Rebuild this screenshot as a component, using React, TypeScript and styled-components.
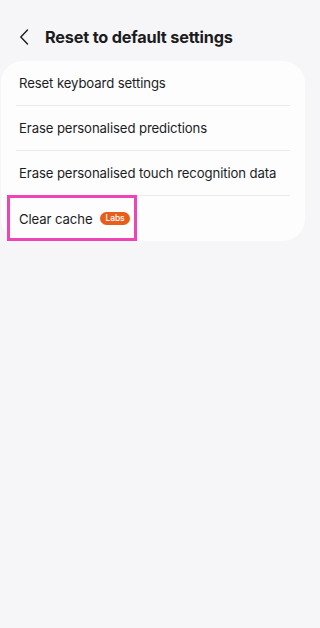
import styled, { createGlobalStyle } from "styled-components"

const GlobalStyle = createGlobalStyle`
  html, body {
    margin: 0;
    padding: 0;
    background: #f6f6f8;
  }
  body {
    font-family: Inter, Roboto, "Noto Sans", sans-serif;
    color: #1c1c1e;
  }
`

const Page = styled.div`
  width: 306px;
  min-height: 628px;
  background: #f6f6f8;
`

const Header = styled.div`
  display: flex;
  align-items: center;
  height: 61px;
  padding: 12px 0 0 16px;
  box-sizing: border-box;
`

const BackButton = styled.button`
  display: flex;
  align-items: center;
  justify-content: center;
  width: 16px;
  height: 24px;
  padding: 0;
  margin-right: 13px;
  border: 0;
  background: none;
  color: #1c1c1e;
`

const Title = styled.h1`
  margin: 0;
  font-size: 16.3px;
  font-weight: 700;
  letter-spacing: -0.2px;
`

const Card = styled.div`
  background: #fdfdfe;
  border-radius: 22px;
  margin: 0 1px;
  padding: 0 15px;
`

const Row = styled.div<{ $last?: boolean }>`
  position: relative;
  display: flex;
  align-items: center;
  height: 45px;
  box-sizing: border-box;
  padding: 0 3px;
  border-bottom: ${(p) => (p.$last ? "none" : "1px solid #ebebee")};
  font-size: 13.15px;
  letter-spacing: -0.1px;
`

const Badge = styled.span`
  margin-left: 8px;
  padding: 0 5px;
  height: 13px;
  line-height: 13px;
  border-radius: 7px;
  background: #e85d1c;
  color: #fff;
  font-size: 8.5px;
  font-weight: 500;
`

const Highlight = styled.div`
  position: absolute;
  left: -9px;
  top: -1px;
  width: 130px;
  height: 46px;
  border: 3px solid #ee44b8;
  box-sizing: border-box;
  pointer-events: none;
`

export default function App() {
  return (
    <Page>
      <GlobalStyle />
      <Header>
        <BackButton>
          <svg width="10" height="16" viewBox="0 0 10 16" fill="none">
            <path d="M8.5 1L1.8 8L8.5 15" stroke="currentColor" strokeWidth="1.4" strokeLinecap="round" strokeLinejoin="round" />
          </svg>
        </BackButton>
        <Title>Reset to default settings</Title>
      </Header>
      <Card>
        <Row>Reset keyboard settings</Row>
        <Row>Erase personalised predictions</Row>
        <Row>Erase personalised touch recognition data</Row>
        <Row $last>
          Clear cache
          <Badge>Labs</Badge>
          <Highlight />
        </Row>
      </Card>
    </Page>
  )
}
